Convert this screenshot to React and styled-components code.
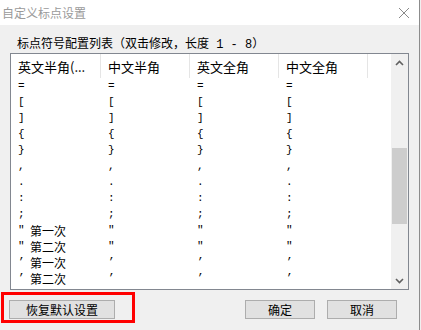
import React from 'react';
import styled, { createGlobalStyle } from 'styled-components';

const GlobalStyle = createGlobalStyle`
  html, body {
    margin: 0;
    padding: 0;
    background: #f0f0f0;
    font-family: "Noto Sans CJK SC", "Liberation Sans", sans-serif;
  }
`;

const Window = styled.div`
  position: relative;
  width: 419px;
  height: 330px;
  border-right: 1px solid #8c8c8c;
  background: #f0f0f0;
  display: flex;
  flex-direction: column;
  overflow: hidden;
`;

const TitleBar = styled.div`
  height: 25px;
  flex: none;
  background: #fff;
  display: flex;
  align-items: center;
  justify-content: space-between;
  padding: 0 9px 0 2px;
  font-size: 12px;
  color: #9a9a9a;
`;

const CloseButton = styled.div`
  width: 12px;
  height: 12px;
  display: flex;
`;

const Body = styled.div`
  flex: 1;
  display: flex;
  flex-direction: column;
  padding: 10px 0 0 10px;
`;

const Label = styled.div`
  height: 15px;
  margin: 0 0 3px 7px;
  font-size: 12px;
  line-height: 15px;
  color: #000;
  white-space: pre;
`;

const Digits = styled.span`
  font-family: "Liberation Mono", monospace;
  font-size: 12px;
`;

const ListBox = styled.div`
  width: 397px;
  height: 235px;
  border: 1px solid #828790;
  background: #fff;
  display: flex;
`;

const Columns = styled.div`
  flex: 1;
  display: flex;
  flex-direction: column;
`;

const Grid = styled.div`
  display: grid;
  grid-template-columns: 90px 89px 89px 89px 23px;
`;

const HeaderCell = styled.div`
  height: 24px;
  display: flex;
  align-items: center;
  padding-left: 7px;
  font-size: 13px;
  color: #000;
  border-right: ${p => (p.$last ? 'none' : '1px solid #e5e5e5')};
  white-space: nowrap;
  overflow: hidden;
`;

const Cell = styled.div`
  height: 16px;
  display: flex;
  align-items: center;
  padding-left: 7px;
  font-size: 12px;
  color: #000;
  white-space: pre;
`;

const Mark = styled.span`
  display: inline-block;
  width: 12px;
  font-family: "Liberation Mono", monospace;
  font-size: 11px;
`;

const ScrollBar = styled.div`
  width: 17px;
  flex: none;
  background: #f0f0f0;
  display: flex;
  flex-direction: column;
`;

const Arrow = styled.div`
  height: 17px;
  display: flex;
  align-items: center;
  justify-content: center;
`;

const Track = styled.div`
  flex: 1;
  display: flex;
  flex-direction: column;
  padding: 0 1px;
`;

const Thumb = styled.div`
  margin-top: 77px;
  height: 76px;
  background: #cdcdcd;
`;

const Footer = styled.div`
  position: relative;
  display: flex;
  align-items: center;
  gap: 12px;
  padding: 10px 0 0 9px;
`;

const Button = styled.button`
  width: ${p => p.$w}px;
  height: 19px;
  margin-right: ${p => p.$gapAfter || 0}px;
  padding: 0;
  border: 1px solid #adadad;
  background: #e1e1e1;
  font-family: "Noto Sans CJK SC", sans-serif;
  font-size: 12px;
  color: #000;
  line-height: 17px;
`;

const Highlight = styled.div`
  position: absolute;
  left: 1px;
  top: 2px;
  width: 128px;
  height: 25px;
  border: 3px solid #ff0000;
  pointer-events: none;
`;

const symbols = ['=', '[', ']', '{', '}', ',', '.', ':', ';'];
const quoteRows = [
  ['″', '第一次'],
  ['″', '第二次'],
  ['’', '第一次'],
  ['’', '第二次'],
];

const headers = ['英文半角(...', '中文半角', '英文全角', '中文全角'];

const Chevron = ({ up }) => (
  <svg width="9" height="6" viewBox="0 0 9 6">
    <path
      d={up ? 'M1 5 L4.5 1.5 L8 5' : 'M1 1 L4.5 4.5 L8 1'}
      fill="none"
      stroke="#606060"
      strokeWidth="1.6"
    />
  </svg>
);

const App = () => (
  <>
    <GlobalStyle />
    <Window>
      <TitleBar>
        <span>自定义标点设置</span>
        <CloseButton>
          <svg width="12" height="12" viewBox="0 0 12 12">
            <path d="M1 1 L11 11 M11 1 L1 11" stroke="#8a8a8a" strokeWidth="1" fill="none" />
          </svg>
        </CloseButton>
      </TitleBar>
      <Body>
        <Label>
          标点符号配置列表（双击修改，长度<Digits> 1 - 8</Digits>）
        </Label>
        <ListBox>
          <Columns>
            <Grid>
              {headers.map(h => (
                <HeaderCell key={h}>{h}</HeaderCell>
              ))}
              <HeaderCell $last />
            </Grid>
            <Grid>
              {symbols.map(s => (
                <React.Fragment key={s}>
                  {[0, 1, 2, 3].map(i => (
                    <Cell key={i}>
                      <Mark>{s}</Mark>
                    </Cell>
                  ))}
                  <Cell />
                </React.Fragment>
              ))}
              {quoteRows.map(([q, t], r) => (
                <React.Fragment key={r}>
                  <Cell>
                    <Mark>{q}</Mark>
                    {t}
                  </Cell>
                  {[1, 2, 3].map(i => (
                    <Cell key={i}>
                      <Mark>{q}</Mark>
                    </Cell>
                  ))}
                  <Cell />
                </React.Fragment>
              ))}
            </Grid>
          </Columns>
          <ScrollBar>
            <Arrow>
              <Chevron up />
            </Arrow>
            <Track>
              <Thumb />
            </Track>
            <Arrow>
              <Chevron />
            </Arrow>
          </ScrollBar>
        </ListBox>
      </Body>
      <Footer>
        <Button $w={106} $gapAfter={118}>恢复默认设置</Button>
        <Button $w={70}>确定</Button>
        <Button $w={70}>取消</Button>
        <Highlight />
      </Footer>
      <div style={{ height: 11 }} />
    </Window>
  </>
);

export default App;
